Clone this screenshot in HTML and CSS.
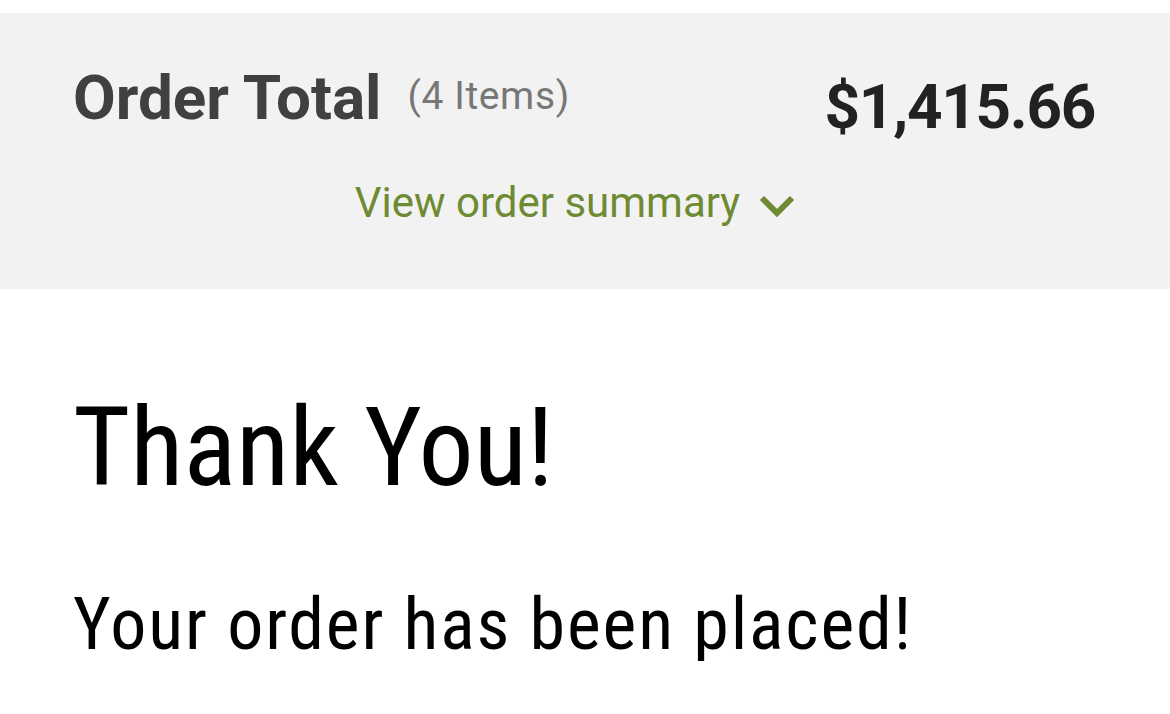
FILE: index.html
```html
<!DOCTYPE html>
<html lang="en">
<head>
<meta charset="utf-8">
<title>Order Confirmation</title>
<link rel="stylesheet" href="styles.css">
</head>
<body>
<section class="summary">
  <div class="summary-row">
    <div class="summary-title">
      <span class="title">Order Total</span>
      <span class="items">(4 Items)</span>
    </div>
    <span class="price">$1,415.66</span>
  </div>
  <a class="toggle" href="#">
    <span class="toggle-text">View order summary</span>
    <svg class="chevron" width="36" height="24" viewBox="0 0 36 24" aria-hidden="true">
      <path d="M3 4 L18 19 L33 4" fill="none" stroke="#6e8b33" stroke-width="6"/>
    </svg>
  </a>
</section>
<main class="content">
  <h1 class="thanks">Thank You!</h1>
  <p class="placed">Your order has been placed!</p>
</main>
</body>
</html>
```

FILE: styles.css
```css
html, body {
  margin: 0;
  padding: 0;
  background: #ffffff;
}

body {
  font-family: Roboto, "Noto Sans", sans-serif;
  padding-top: 13px;
}

.summary {
  background: #f2f2f2;
  height: 276px;
  box-sizing: border-box;
  padding: 54px 75px 0 73px;
}

.summary-row {
  display: flex;
  justify-content: space-between;
  align-items: flex-start;
}

.summary-title {
  display: flex;
  align-items: flex-start;
}

.title {
  font-size: 62px;
  line-height: 62px;
  font-weight: 700;
  color: #404040;
}

.items {
  font-size: 39px;
  line-height: 39px;
  letter-spacing: 0.6px;
  color: #777777;
  margin-left: 26px;
  margin-top: 10px;
}

.price {
  font-size: 62px;
  line-height: 62px;
  font-weight: 700;
  letter-spacing: -1.3px;
  color: #222222;
  margin-top: 9px;
}

.toggle {
  display: flex;
  justify-content: center;
  align-items: center;
  gap: 19px;
  margin-top: 44px;
  padding-right: 18px;
  text-decoration: none;
  color: #6e8b33;
}

.toggle-text {
  font-size: 42px;
  line-height: 42px;
}

.chevron {
  display: block;
  margin-top: 5px;
}

.content {
  padding: 0 73px;
}

.thanks {
  margin: 0;
  padding-top: 104px;
  font-size: 110px;
  line-height: 110px;
  font-weight: 400;
  color: #000000;
  font-stretch: 87%;
}

.placed {
  margin: 0;
  padding-top: 86px;
  font-size: 72px;
  line-height: 72px;
  font-weight: 400;
  letter-spacing: 1.85px;
  color: #000000;
  font-stretch: 87%;
}
```
